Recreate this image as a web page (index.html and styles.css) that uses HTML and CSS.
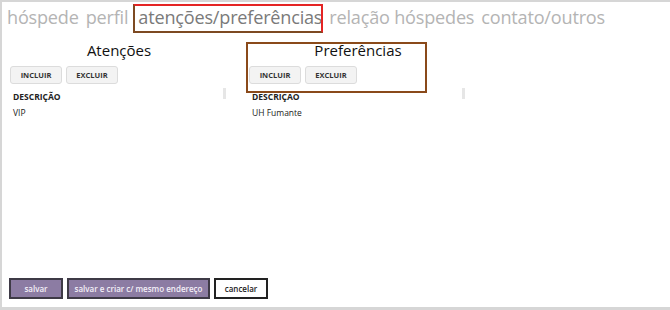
FILE: index.html
```html
<!DOCTYPE html>
<html lang="pt">
<head>
<meta charset="utf-8">
<link rel="stylesheet" href="styles.css">
</head>
<body>
<div class="frame">
  <nav class="tabs">
    <span class="tab">hóspede</span>
    <span class="tab">perfil</span>
    <span class="tab active">atenções/preferências</span>
    <span class="tab">relação hóspedes</span>
    <span class="tab">contato/outros</span>
    <span class="mark mark-tab"></span>
  </nav>
  <div class="panels">
    <section class="panel">
      <h2 class="panel-title">Atenções</h2>
      <div class="actions">
        <button class="btn">INCLUIR</button>
        <button class="btn">EXCLUIR</button>
      </div>
      <div class="list">
        <div class="list-head">DESCRIÇÃO</div>
        <div class="list-row">VIP</div>
        <span class="scroll"></span>
      </div>
    </section>
    <section class="panel">
      <h2 class="panel-title">Preferências</h2>
      <div class="actions">
        <button class="btn">INCLUIR</button>
        <button class="btn">EXCLUIR</button>
      </div>
      <div class="list">
        <div class="list-head">DESCRIÇÃO</div>
        <div class="list-row">UH Fumante</div>
        <span class="scroll"></span>
      </div>
      <span class="mark mark-pref"></span>
    </section>
  </div>
  <footer class="footer">
    <button class="fbtn primary short">salvar</button>
    <button class="fbtn primary long">salvar e criar c/ mesmo endereço</button>
    <button class="fbtn plain short">cancelar</button>
  </footer>
</div>
</body>
</html>
```
FILE: styles.css
```css
* { box-sizing: border-box; }
html, body { margin: 0; padding: 0; background: #fff; }
body { font-family: "Open Sans", "Noto Sans", sans-serif; color: #222; }

.frame {
  width: 670px;
  height: 310px;
  border-top: 2px solid #d6d6d6;
  border-left: 2px solid #d6d6d6;
  border-bottom: 3px solid #d6d6d6;
  display: flex;
  flex-direction: column;
  position: relative;
}

.tabs {
  position: relative;
  display: flex;
  gap: 7px;
  padding: 1px 0 0 5px;
  height: 30px;
  font-size: 18.1px;
  line-height: 28px;
  color: #b4b4b4;
  letter-spacing: -0.2px;
}
.tab.active { color: #7a7a7a; margin-left: 3px; }

.mark { position: absolute; border: 2px solid; pointer-events: none; }
.mark-tab {
  left: 131px; top: 2px; width: 190px; height: 29px;
  border-color: #e42424 #e42424 #7d4a22 #7d4a22;
}
.mark-pref {
  left: -3px; top: 2px; width: 181px; height: 51px;
  border-color: #8a4a1a;
}

.panels {
  display: flex;
  gap: 21px;
  padding: 8px 0 0 8px;
}
.panel { width: 218px; position: relative; }
.panel-title {
  margin: 0;
  font-size: 15px;
  font-weight: 400;
  text-align: center;
  line-height: 20px;
  color: #111;
}
.actions { display: flex; gap: 4px; margin-top: 6px; }
.btn {
  width: 52px;
  height: 18px;
  padding: 0;
  font-family: inherit;
  font-size: 7.5px;
  font-weight: 700;
  color: #333;
  background: #f3f3f3;
  border: 1px solid #dcdcdc;
  border-radius: 3px;
}
.list { position: relative; padding: 5px 0 0 3px; }
.list-head { font-size: 8.5px; font-weight: 700; line-height: 16px; color: #222; }
.list-row { font-size: 8.5px; line-height: 16px; color: #222; }
.scroll {
  position: absolute;
  right: 2px; top: 4px;
  width: 3px; height: 11px;
  background: #e6e6e6;
}

.footer {
  margin-top: auto;
  display: flex;
  gap: 4px;
  padding: 0 0 8px 7px;
}
.fbtn {
  height: 21px;
  padding: 0;
  font-family: inherit;
  font-size: 8px;
  font-weight: 600;
  border: 2px solid #3e3a46;
}
.fbtn.short { width: 54px; }
.fbtn.long { width: 143px; }
.fbtn.primary { background: #8c7ca3; color: #f4f0f8; }
.fbtn.plain { background: #fff; color: #222; border-color: #222; }
```
